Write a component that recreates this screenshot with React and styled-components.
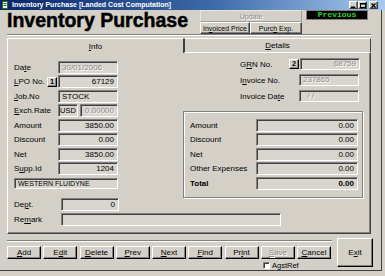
import React from 'react'
import styled, { createGlobalStyle, css } from 'styled-components'

const GlobalStyle = createGlobalStyle`
  html, body {
    margin: 0;
    padding: 0;
    background: #d4d0c8;
  }
  body {
    font-family: "Liberation Sans", Arial, sans-serif;
    font-size: 8px;
    color: #000;
  }
  * {
    box-sizing: border-box;
  }
`

const raised = css`
  border: 1px solid;
  border-color: #ffffff #404040 #404040 #ffffff;
  box-shadow: inset -1px -1px 0 #808080;
`

const sunken = css`
  border: 1px solid;
  border-color: #808080 #ffffff #ffffff #808080;
  box-shadow: inset 1px 1px 0 #404040;
`

const disabledText = css`
  color: #8c8a85;
  text-shadow: 1px 1px 0 #ffffff;
`

const Window = styled.div`
  width: 385px;
  height: 276px;
  display: flex;
  flex-direction: column;
  overflow: hidden;
`

const TitleBar = styled.div`
  height: 10px;
  flex: none;
  display: flex;
  align-items: center;
  padding: 0 7px 0 2px;
  background: linear-gradient(90deg, #0a246a 0%, #3c6aa8 55%, #a6caf0 100%);
  color: #fff;
  font-weight: bold;
  font-size: 7px;
  line-height: 10px;
`

const TitleText = styled.span`
  margin-left: 4px;
  flex: 1;
  white-space: nowrap;
`

const Controls = styled.div`
  display: flex;
`

const CtrlBtn = styled.div`
  width: 9px;
  height: 8px;
  background: #d4d0c8;
  ${raised};
  display: flex;
  align-items: center;
  justify-content: center;
  margin-left: ${p => (p.$gap ? '2px' : '0')};
`

const Client = styled.div`
  width: 382px;
  height: 261px;
  flex: none;
  border-right: 1px solid #404040;
  border-bottom: 1px solid #404040;
  padding-left: 7px;
  display: flex;
  flex-direction: column;
`

const Header = styled.div`
  height: 24px;
  display: flex;
  align-items: flex-start;
`

const BigTitle = styled.div`
  width: 193px;
  font-size: 19.5px;
  line-height: 20px;
  font-weight: bold;
  -webkit-text-stroke: 0.5px #000;
  white-space: nowrap;
`

const HeadButtons = styled.div`
  width: 102px;
  display: flex;
  flex-direction: column;
`

const HeadRow = styled.div`
  display: flex;
`

const HeadBtn = styled.div`
  height: 12px;
  width: ${p => p.$w}px;
  ${raised};
  background: #d4d0c8;
  display: flex;
  align-items: center;
  justify-content: center;
  font-size: 7px;
  white-space: pre;
  ${p => p.$disabled && disabledText};
  ${p => p.$disabled && css`border-color: #e8e6e2 #a09d98 #a09d98 #e8e6e2; box-shadow: none;`}
`

const Previous = styled.div`
  width: 62px;
  height: 10px;
  margin-left: 4px;
  background: #000;
  border: 1px solid #808080;
  color: #2bd62b;
  font-family: "Liberation Mono", "Courier New", monospace;
  font-weight: bold;
  font-size: 8px;
  line-height: 8px;
  text-align: center;
`

const Separator = styled.div`
  width: 364px;
  height: 2px;
  border-top: 1px solid #808080;
  border-bottom: 1px solid #ffffff;
`

const TabStrip = styled.div`
  margin-top: 2px;
  display: flex;
  height: 15px;
`

const Tab = styled.div`
  width: ${p => p.$w}px;
  height: 15px;
  border-top: 1px solid #ffffff;
  border-left: 1px solid ${p => (p.$active ? '#ffffff' : '#404040')};
  border-right: 1px solid #404040;
  border-bottom: ${p => (p.$active ? 'none' : '1px solid #ffffff')};
  display: flex;
  align-items: center;
  justify-content: center;
  font-size: 8px;
`

const Panel = styled.div`
  width: 364px;
  height: 181px;
  border-left: 1px solid #ffffff;
  border-right: 1px solid #404040;
  border-bottom: 1px solid #404040;
  box-shadow: inset -1px -1px 0 #808080;
  padding: 5px 0 0 6px;
  display: flex;
  flex-direction: column;
`

const Columns = styled.div`
  display: grid;
  grid-template-columns: 104px 180px;
  column-gap: 65px;
  align-items: start;
`

const Stack = styled.div`
  display: flex;
  flex-direction: column;
  gap: ${p => p.$gap}px;
  padding-top: ${p => p.$top || 0}px;
  padding-left: ${p => p.$left || 0}px;
`

const Row = styled.div`
  height: ${p => p.$h || 13}px;
  display: flex;
  align-items: center;
`

const Label = styled.div`
  width: ${p => p.$w}px;
  flex: none;
  white-space: nowrap;
  font-weight: ${p => (p.$bold ? 'bold' : 'normal')};
`

const Field = styled.div`
  width: ${p => p.$w}px;
  height: ${p => p.$h || 13}px;
  flex: none;
  ${sunken};
  background: #d8d5cf;
  padding: 0 ${p => (p.$pad !== undefined ? p.$pad : 3)}px;
  margin-left: ${p => p.$ml || 0}px;
  font-size: ${p => p.$fs || 8}px;
  line-height: ${p => (p.$h || 13) - 2}px;
  text-align: ${p => p.$align || 'right'};
  white-space: pre;
  overflow: hidden;
  font-weight: ${p => (p.$bold ? 'bold' : 'normal')};
  ${p => p.$disabled && disabledText};
`

const KeyBtn = styled.div`
  width: 10px;
  height: 10px;
  flex: none;
  margin-right: 1px;
  ${raised};
  border-color: #ffffff #000 #000 #ffffff;
  display: flex;
  align-items: center;
  justify-content: center;
  font-weight: bold;
  font-size: 7.5px;
  line-height: 8px;
`

const GroupBox = styled.div`
  margin-top: 9px;
  width: 180px;
  height: 87px;
  border: 1px solid #808080;
  box-shadow: inset 1px 1px 0 #ffffff, 1px 1px 0 #ffffff;
  padding: 6.5px 0 0 6px;
  display: flex;
  flex-direction: column;
  gap: 1.5px;
`

const Footer = styled.div`
  display: flex;
  flex-direction: column;
  gap: 2px;
`

const BottomBar = styled.div`
  display: flex;
  align-items: flex-start;
`

const BottomLeft = styled.div`
  width: 325px;
  display: flex;
  flex-direction: column;
`

const Groove = styled.div`
  margin-top: 6px;
  height: 2px;
  border-top: 1px solid #808080;
  border-bottom: 1px solid #ffffff;
`

const ButtonRow = styled.div`
  margin-top: 4px;
  display: flex;
  gap: 2.25px;
`

const Button = styled.div`
  width: ${p => p.$w || 34}px;
  height: ${p => p.$h || 13}px;
  ${raised};
  border-color: #ffffff #000 #000 #ffffff;
  background: #d4d0c8;
  display: flex;
  align-items: center;
  justify-content: center;
  font-size: 8px;
  ${p => p.$disabled && disabledText};
`

const CheckRow = styled.div`
  margin-top: 3px;
  padding-left: 256px;
  height: 7px;
  display: flex;
  align-items: center;
  gap: 2px;
  font-size: 7.5px;
`

const CheckBox = styled.div`
  width: 7px;
  height: 7px;
  background: #fff;
  ${sunken};
`

const ExitWrap = styled.div`
  margin: 4px 0 0 5px;
`

const K = styled.span`
  text-decoration: underline;
`

function ul(text, idx) {
  if (idx < 0) return text
  return (
    <>
      {text.slice(0, idx)}
      <K>{text[idx]}</K>
      {text.slice(idx + 1)}
    </>
  )
}

const leftRows = [
  { label: ['Date', 2], value: '30/01/2006', align: 'left', disabled: true },
  { label: ['LPO No.', 0], key: '1', value: '67129' },
  { label: ['Job.No', 0], value: 'STOCK', align: 'left' },
  { label: ['Exch.Rate', 0], exch: true },
  { label: ['Amount', -1], value: '3850.00' },
  { label: ['Discount', -1], value: '0.00' },
  { label: ['Net', -1], value: '3850.00' },
  { label: ['Supp.Id', 1], value: '1204' },
]

const totals = [
  ['Amount', '0.00'],
  ['Discount', '0.00'],
  ['Net', '0.00'],
  ['Other Expenses', '0.00'],
  ['Total', '0.00', true],
]

const actions = [
  ['Add', 0],
  ['Edit', 1],
  ['Delete', 0],
  ['Prev', 0],
  ['Next', 0],
  ['Find', 0],
  ['Print', 2],
  ['Save', 0, true],
  ['Cancel', 0],
]

function AppIcon() {
  return (
    <svg width="6" height="8" viewBox="0 0 6 8">
      <rect x="0.5" y="0.5" width="5" height="7" fill="#e8f4e0" stroke="#2a6a2a" />
      <rect x="1.5" y="2" width="3" height="1" fill="#2a6a2a" />
      <rect x="1.5" y="4" width="3" height="1" fill="#2a6a2a" />
    </svg>
  )
}

export default function App() {
  return (
    <>
      <GlobalStyle />
      <Window>
        <TitleBar>
          <AppIcon />
          <TitleText>Inventory Purchase [Landed Cost Computation]</TitleText>
          <Controls>
            <CtrlBtn>
              <svg width="5" height="5" viewBox="0 0 5 5"><rect x="0" y="3.5" width="4" height="1.5" fill="#000" /></svg>
            </CtrlBtn>
            <CtrlBtn>
              <svg width="6" height="5" viewBox="0 0 6 5"><rect x="0.5" y="0.5" width="5" height="4" fill="none" stroke="#000" /><rect x="0" y="0" width="6" height="1.5" fill="#000" /></svg>
            </CtrlBtn>
            <CtrlBtn $gap>
              <svg width="5" height="5" viewBox="0 0 5 5"><path d="M0.5 0.5 L4.5 4.5 M4.5 0.5 L0.5 4.5" stroke="#000" strokeWidth="1.3" /></svg>
            </CtrlBtn>
          </Controls>
        </TitleBar>

        <Client>
          <Header>
            <BigTitle>Inventory Purchase</BigTitle>
            <HeadButtons>
              <HeadBtn $w={102} $disabled>Update</HeadBtn>
              <HeadRow>
                <HeadBtn $w={50}>{ul('Invoiced Price', 2)}</HeadBtn>
                <HeadBtn $w={52}>{ul('Purch Exp.', 4)}</HeadBtn>
              </HeadRow>
            </HeadButtons>
            <Previous>Previous</Previous>
          </Header>
          <Separator />

          <TabStrip>
            <Tab $w={177} $active>{ul('Info', 0)}</Tab>
            <Tab $w={187}>{ul('Details', 0)}</Tab>
          </TabStrip>

          <Panel>
            <Columns>
              <Stack $gap={1.5} $top={2.5}>
                {leftRows.map(r => (
                  <Row key={r.label[0]}>
                    {r.key ? (
                      <>
                        <Label $w={33}>{ul(r.label[0], r.label[1])}</Label>
                        <KeyBtn>{r.key}</KeyBtn>
                      </>
                    ) : (
                      <Label $w={44}>{ul(r.label[0], r.label[1])}</Label>
                    )}
                    {r.exch ? (
                      <>
                        <Field $w={20} $pad={1} $fs={7.5} $align="center">USD</Field>
                        <Field $w={38} $ml={2} $disabled>0.00000</Field>
                      </>
                    ) : (
                      <Field $w={60} $align={r.align} $disabled={r.disabled}>{r.value}</Field>
                    )}
                  </Row>
                ))}
                <Row>
                  <Field $w={104} $h={11} $fs={7} $align="left">WESTERN FLUIDYNE</Field>
                </Row>
              </Stack>

              <div>
                <Stack $gap={4} $left={57}>
                  <Row $h={12}>
                    <Label $w={49}>{ul('GRN No.', 1)}</Label>
                    <KeyBtn>2</KeyBtn>
                    <Field $w={60} $h={12} $disabled>68759</Field>
                  </Row>
                  <Row $h={12}>
                    <Label $w={59}>{ul('Invoice No.', 1)}</Label>
                    <Field $w={60} $h={12} $disabled $align="left">237865</Field>
                  </Row>
                  <Row $h={12}>
                    <Label $w={59}>{ul('Invoice Date', 10)}</Label>
                    <Field $w={60} $h={12} $disabled $align="left">{'  / /'}</Field>
                  </Row>
                </Stack>
                <GroupBox>
                  {totals.map(([l, v, b]) => (
                    <Row key={l}>
                      <Label $w={66} $bold={b}>{l}</Label>
                      <Field $w={102} $bold={b}>{v}</Field>
                    </Row>
                  ))}
                </GroupBox>
              </div>
            </Columns>

            <Footer>
              <Row>
                <Label $w={47}>{ul('Dept.', 2)}</Label>
                <Field $w={58}>0</Field>
              </Row>
              <Row>
                <Label $w={47}>{ul('Remark', 2)}</Label>
                <Field $w={220} />
              </Row>
            </Footer>
          </Panel>

          <BottomBar>
            <BottomLeft>
              <Groove />
              <ButtonRow>
                {actions.map(([t, i, d]) => (
                  <Button key={t} $disabled={d}>{ul(t, i)}</Button>
                ))}
              </ButtonRow>
              <CheckRow>
                <CheckBox />
                <span>AgstRef</span>
              </CheckRow>
            </BottomLeft>
            <ExitWrap>
              <Button $w={36} $h={29}>{ul('Exit', 1)}</Button>
            </ExitWrap>
          </BottomBar>
        </Client>
      </Window>
    </>
  )
}
